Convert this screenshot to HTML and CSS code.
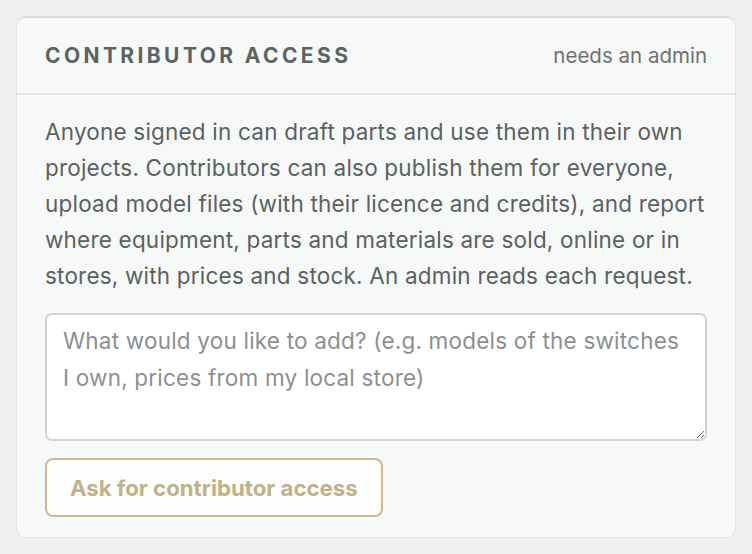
FILE: index.html
```html
<!DOCTYPE html>
<html lang="en">
<head>
<meta charset="utf-8">
<title>Contributor access</title>
<link rel="stylesheet" href="styles.css">
</head>
<body>
<section class="card">
  <header class="card-head">
    <h2 class="title">CONTRIBUTOR ACCESS</h2>
    <span class="note">needs an admin</span>
  </header>
  <div class="card-body">
    <p class="intro">Anyone signed in can draft parts and use them in their own projects. Contributors can also publish them for everyone, upload model files (with their licence and credits), and report where equipment, parts and materials are sold, online or in stores, with prices and stock. An admin reads each request.</p>
    <textarea class="request" placeholder="What would you like to add? (e.g. models of the switches I own, prices from my local store)"></textarea>
    <button class="ask" type="button">Ask for contributor access</button>
  </div>
</section>
</body>
</html>
```
FILE: styles.css
```css
* { box-sizing: border-box; }
html, body { margin: 0; padding: 0; }
body {
  background: #eef0ef;
  padding: 16px;
  font-family: Inter, "Liberation Sans", Arial, sans-serif;
}
.card {
  background: #f7f8f8;
  border: 1px solid #e3e5e4;
  border-top: 2px solid #dcdedd;
  border-radius: 10px;
  width: 720px;
  height: 522px;
  overflow: hidden;
}
.card-head {
  display: flex;
  justify-content: space-between;
  align-items: center;
  height: 77px;
  padding: 0 28px 0 28px;
  border-bottom: 2px solid #e4e6e5;
}
.title {
  margin: 0;
  font-size: 21px;
  font-weight: 700;
  letter-spacing: 3.4px;
  color: #5c6462;
}
.note {
  font-size: 20.5px;
  color: #6e7271;
}
.card-body {
  padding: 19px 28px 20px 28px;
  display: flex;
  flex-direction: column;
  align-items: flex-start;
}
.intro {
  margin: 0;
  font-size: 22.5px;
  letter-spacing: 0.2px;
  line-height: 36px;
  color: #5a6260;
}
.request {
  margin-top: 19px;
  width: 100%;
  height: 128px;
  border: 2px solid #d3d6d5;
  border-radius: 7px;
  background: #ffffff;
  padding: 7px 22px 7px 16px;
  font-family: inherit;
  font-size: 22.5px;
  letter-spacing: 0.2px;
  line-height: 37px;
  color: #5a6260;
  resize: vertical;
}
.request::placeholder { color: #8c908f; }
.ask {
  margin-top: 17px;
  height: 59px;
  padding: 0 23px;
  border: 2px solid #cbbb8f;
  border-radius: 8px;
  background: #fdfdfb;
  color: #c0b189;
  font-family: inherit;
  font-size: 22.2px;
  font-weight: 700;
}
```
